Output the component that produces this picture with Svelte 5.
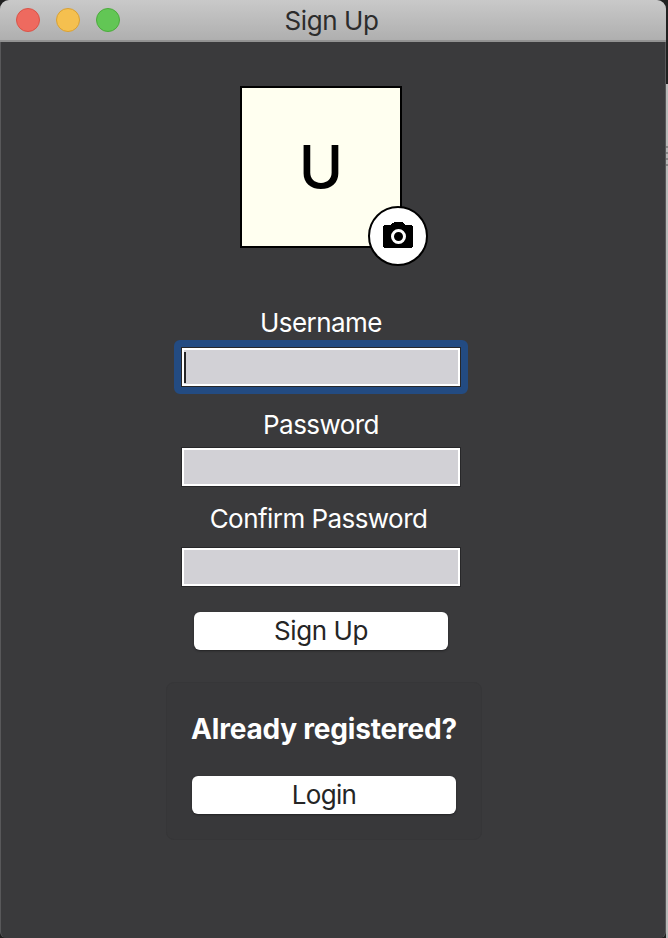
<script>
  const lights = ['close', 'minimize', 'zoom'];
  const fields = [
    { id: 'username', label: 'Username', type: 'text', active: true },
    { id: 'password', label: 'Password', type: 'password', active: false },
    { id: 'confirm', label: 'Confirm Password', type: 'password', active: false }
  ];
</script>

<div class="screen">
  <main class="window">
    <header>
      <div class="lights">
        {#each lights as light}
          <span class="light {light}"></span>
        {/each}
      </div>
      <h1>Sign Up</h1>
    </header>

    <div class="body">
      <div class="avatar">
        <span class="initial">U</span>
        <div class="camera">
          <svg width="30" height="28" viewBox="0 0 30 28" aria-hidden="true">
            <path d="M9 2h2V1h9v1h1v1h1v1h7v1h1v21h-1v1H1v-1H0V5h1V4h7V3h1z" fill="#000" />
            <circle cx="15.5" cy="15.5" r="6" fill="none" stroke="#fff" stroke-width="3" />
          </svg>
        </div>
      </div>

      <form>
        {#each fields as field}
          <label class={field.id} for={field.id}>{field.label}</label>
          <div class="field" class:active={field.active}>
            <input id={field.id} type={field.type} />
            {#if field.active}<span class="caret"></span>{/if}
          </div>
        {/each}
        <button class="submit" type="button">Sign Up</button>
      </form>

      <section>
        <h2>Already registered?</h2>
        <button class="login" type="button">Login</button>
      </section>
    </div>
  </main>
  <aside>
    <div class="grip"></div>
  </aside>
</div>

<style>
  :global(body) { background: #202020; }
  .screen {
    display: flex;
    width: 668px;
    height: 938px;
    overflow: hidden;
    background: #202020;
    font-family: Inter, 'Liberation Sans', sans-serif;
    font-size: 26px;
    line-height: 30px;
  }
  .window {
    position: relative;
    width: 666px;
    height: 938px;
    overflow: hidden;
    border-radius: 9px 9px 6px 6px;
    background: #3a3a3c;
  }
  .window::after {
    content: '';
    position: absolute;
    inset: 42px 0 0;
    border: solid #58585a;
    border-width: 0 1px;
    border-radius: 0 0 6px 6px;
    pointer-events: none;
  }
  header {
    box-sizing: border-box;
    display: grid;
    grid-template-columns: 140px 1fr 143px;
    align-items: center;
    height: 42px;
    border-bottom: 2px solid #929292;
    background: linear-gradient(#c9c9c9, #afafaf);
  }
  .lights { display: flex; gap: 16px; padding-left: 16px; }
  .light { box-sizing: border-box; width: 24px; height: 24px; border: 1px solid; border-radius: 50%; }
  .close { background: #ee6a5f; border-color: #d95448; }
  .minimize { background: #f5c04f; border-color: #d8a034; }
  .zoom { background: #62c655; border-color: #4cab3c; }
  h1, h2 { margin: 0; text-align: center; white-space: nowrap; }
  h1 { padding-top: 2px; color: #2c2c2c; font-size: 26px; font-weight: 400; letter-spacing: -0.4px; }
  .body { display: flex; flex-direction: column; align-items: center; width: 642px; }
  .avatar {
    position: relative;
    box-sizing: border-box;
    display: grid;
    place-items: center;
    width: 162px;
    height: 162px;
    margin-top: 44px;
    border: 2px solid #000;
    background: #fffff0;
  }
  .initial { color: #000; font-size: 60px; font-weight: 500; line-height: 156px; }
  .camera {
    position: absolute;
    right: -28px;
    bottom: -20px;
    box-sizing: border-box;
    display: grid;
    place-items: center;
    width: 60px;
    height: 60px;
    border: 2px solid #000;
    border-radius: 50%;
    background: #fff;
  }
  .camera svg { display: block; margin-top: -2px; }
  form { display: flex; flex-direction: column; align-items: center; margin-top: 60px; }
  label { height: 30px; margin-bottom: 8px; color: #fff; letter-spacing: -0.55px; line-height: 30px; }
  label.username { margin-bottom: 10px; }
  label.confirm { margin-bottom: 14px; padding-right: 5px; }
  .field {
    position: relative;
    box-sizing: border-box;
    width: 278px;
    height: 38px;
    margin-bottom: 18px;
    border: 2px solid #fff;
    background: #d2d1d6;
    box-shadow: 0 0 0 1px #272729;
  }
  .field.active { margin-bottom: 24px; }
  .active::before {
    content: '';
    position: absolute;
    inset: -10px;
    border: 7px solid #234b82;
    border-radius: 6px;
  }
  .field:nth-of-type(3) { margin-bottom: 26px; }
  input {
    display: block;
    box-sizing: border-box;
    width: 100%;
    height: 100%;
    padding: 0 4px;
    border: 0;
    outline: 0;
    background: transparent;
    font: inherit;
  }
  .caret { position: absolute; left: 0; top: 2px; width: 2px; height: 31px; background: #252527; }
  button {
    display: block;
    height: 38px;
    padding: 0;
    border: 0;
    border-radius: 6px;
    background: #fff;
    color: #252525;
    font: inherit;
    letter-spacing: -0.4px;
    line-height: 38px;
    text-align: center;
    box-shadow: 0 1px 2px #222224;
  }
  .submit { width: 254px; }
  .login { width: 264px; letter-spacing: -0.7px; }
  section {
    box-sizing: border-box;
    display: flex;
    flex-direction: column;
    align-items: center;
    width: 316px;
    height: 158px;
    margin-top: 32px;
    margin-left: 6px;
    padding-top: 31px;
    border: 1px solid #363638;
    border-radius: 8px;
    background: #38383a;
  }
  h2 { height: 30px; margin-bottom: 32px; color: #fff; font-size: 28px; font-weight: 700; letter-spacing: -0.2px; }
  aside { width: 2px; background: linear-gradient(#202020 84px, #b9b9b9 84px); }
  .grip { height: 20px; margin-top: 146px; background: repeating-linear-gradient(#888 0 2px, #b9b9b9 2px 6px); }
</style>
